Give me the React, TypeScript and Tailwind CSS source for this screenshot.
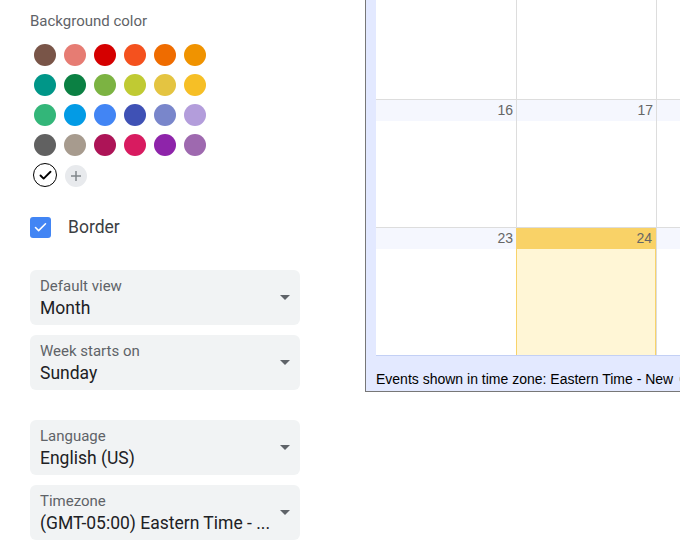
import { Check } from "lucide-react";

const COLORS = [
  ["#795548", "#e67c73", "#d50000", "#f4511e", "#ef6c00", "#f09300"],
  ["#009688", "#0b8043", "#7cb342", "#c0ca33", "#e4c441", "#f6bf26"],
  ["#33b679", "#039be5", "#4285f4", "#3f51b5", "#7986cb", "#b39ddb"],
  ["#616161", "#a79b8e", "#ad1457", "#d81b60", "#8e24aa", "#9e69af"],
];

const SELECTS = [
  { label: "Default view", value: "Month", gap: "mt-[32px]" },
  { label: "Week starts on", value: "Sunday", gap: "mt-[10px]" },
  { label: "Language", value: "English (US)", gap: "mt-[30px]" },
  { label: "Timezone", value: "(GMT-05:00) Eastern Time - ...", gap: "mt-[10px]" },
];

function SelectBox({ label, value, gap }: { label: string; value: string; gap: string }) {
  return (
    <div
      className={`${gap} flex h-[55px] w-[270px] items-center justify-between rounded-md bg-[#f1f3f4] pl-[10px] pr-[10px]`}
    >
      <div className="flex flex-col pt-[2px]">
        <span className="text-[15px] leading-4 text-[#5f6368]">{label}</span>
        <span className="mt-[2px] whitespace-nowrap text-[17.5px] leading-6 text-[#202124]">{value}</span>
      </div>
      <svg width="10" height="5" viewBox="0 0 10 5" className="shrink-0">
        <path d="M0 0h10L5 5z" fill="#5f6368" />
      </svg>
    </div>
  );
}

function DayHeader({ n, today }: { n?: number; today?: boolean }) {
  return (
    <div
      className={`flex h-[21px] items-center justify-end pr-[3px] font-['Liberation_Sans',Arial,sans-serif] text-[14px] text-[#666] ${
        today ? "bg-[#f9d267]" : "bg-[#f5f7fe]"
      }`}
    >
      {n}
    </div>
  );
}

function WeekRow({ days, todayIdx, top }: { days: (number | undefined)[]; todayIdx?: number; top?: boolean }) {
  return (
    <div className={`flex ${top ? "h-[99px]" : "h-[128px] border-t border-[#ddd]"}`}>
      {days.map((d, i) => {
        const today = i === todayIdx;
        return (
          <div
            key={i}
            className={`flex w-[140px] shrink-0 flex-col ${i > 0 ? "border-l" : ""} ${
              today ? "border-r border-l-[#f8d36a] border-r-[#f8d36a]" : "border-[#ddd]"
            }`}
          >
            {!top && <DayHeader n={d} today={today} />}
            <div className={`flex-1 ${today ? "bg-[#fff6d6]" : "bg-white"}`} />
          </div>
        );
      })}
    </div>
  );
}

export default function App() {
  return (
    <div className="flex h-[550px] w-[680px] overflow-hidden bg-white font-['Roboto',Arial,sans-serif]">
      {/* Settings column */}
      <div className="flex w-[365px] shrink-0 flex-col pl-[30px] pt-[11px]">
        <div className="text-[15px] leading-5 text-[#5f6368]">Background color</div>
        <div className="mt-[9px] grid w-[180px] grid-cols-6">
          {COLORS.flat().map((c) => (
            <div key={c} className="flex h-[30px] w-[30px] items-center justify-center">
              <div className="h-[22px] w-[22px] rounded-full" style={{ backgroundColor: c }} />
            </div>
          ))}
          <div className="flex h-[30px] w-[30px] items-center justify-center">
            <div className="flex h-[24px] w-[24px] items-center justify-center rounded-full border-[1.5px] border-black bg-white">
              <Check className="h-[15px] w-[15px] text-black" strokeWidth={3} />
            </div>
          </div>
          <div className="flex h-[30px] w-[30px] items-center justify-center">
            <div className="ml-[2px] mt-[1px] flex h-[22px] w-[22px] items-center justify-center rounded-full bg-[#e8eaed]">
              <svg width="12" height="12" viewBox="0 0 12 12">
                <path d="M6 1v10M1 6h10" stroke="#80868b" strokeWidth="1.5" />
              </svg>
            </div>
          </div>
        </div>

        <div className="mt-[26px] flex h-[22px] items-center">
          <div className="flex h-[21px] w-[21px] items-center justify-center rounded-[3px] bg-[#4285f4]">
            <Check className="h-[15px] w-[15px] text-white" strokeWidth={2.5} />
          </div>
          <span className="ml-[17px] text-[17.5px] text-[#3c4043]">Border</span>
        </div>

        {SELECTS.map((s) => (
          <SelectBox key={s.label} {...s} />
        ))}
      </div>

      {/* Embedded calendar */}
      <div className="flex h-[392px] w-[420px] shrink-0 flex-col border-b border-l border-[#777] bg-[#e3e9ff] pl-[10px]">
        <div className="border-b border-[#c3d0f5] bg-white">
          <WeekRow days={[undefined, undefined, undefined]} top />
          <WeekRow days={[16, 17, undefined]} />
          <WeekRow days={[23, 24, undefined]} todayIdx={1} />
        </div>
        <div className="flex items-center pt-[15px] font-['Liberation_Sans',Arial,sans-serif] text-[14px] leading-4 text-black">
          <span className="whitespace-nowrap">Events shown in time zone: Eastern Time - New</span>
          <span className="ml-[6px] inline-block h-[6px] w-[10px] rounded-sm bg-[#cfc6b6]" />
        </div>
      </div>
    </div>
  );
}
